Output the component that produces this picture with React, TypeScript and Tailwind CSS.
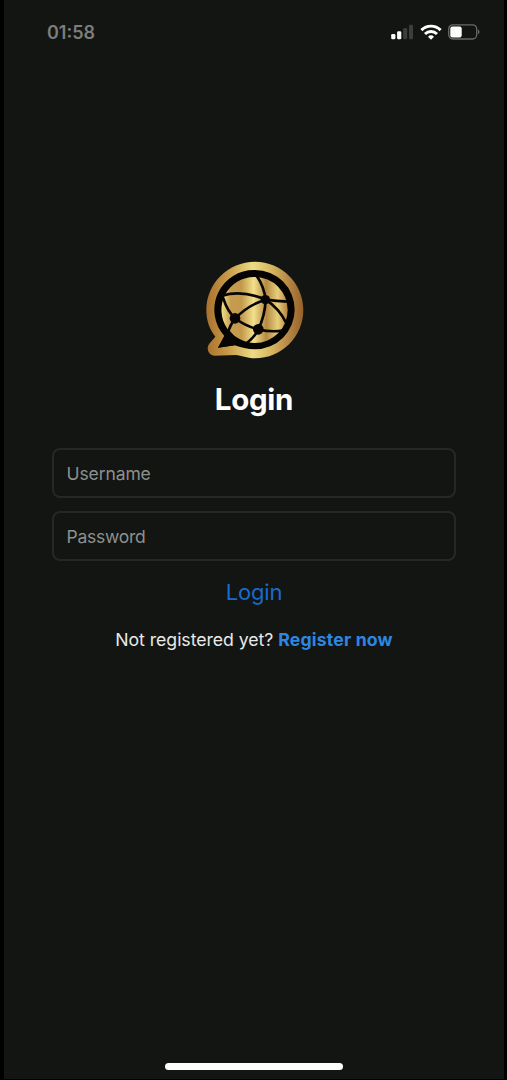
function StatusBar() {
  return (
    <header className="flex h-16 shrink-0 items-center justify-between pl-[43px] pr-[23px]">
      <span className="pt-px text-[18px] font-semibold leading-6 text-[#7c7e7c]">01:58</span>
      <div className="flex items-center">
        <svg className="h-4 w-[24px]" viewBox="0 0 24 16" aria-hidden="true">
          <rect x="0.2" y="10" width="4.2" height="5.3" rx="1.3" fill="#fff" />
          <rect x="6.1" y="7.3" width="4.2" height="8" rx="1.3" fill="#fff" />
          <rect x="12.2" y="4" width="4" height="11.3" rx="1.3" fill="#3c3e3c" />
          <rect x="18" y="0.7" width="4" height="14.6" rx="1.3" fill="#3c3e3c" />
        </svg>
        <svg className="ml-[5px] h-4 w-[22px]" viewBox="0 0 22 16" aria-hidden="true">
          <g fill="none" stroke="#fff" strokeWidth="2.9">
            <path d="M1.4 6.1a13.6 13.6 0 0 1 19.2 0" />
            <path d="M5 10a8.6 8.6 0 0 1 12 0" />
          </g>
          <path d="M11 15.7l-3-3a4.4 4.4 0 0 1 6 0z" fill="#fff" />
        </svg>
        <svg className="ml-[5px] h-4 w-[34px]" viewBox="0 0 34 16" aria-hidden="true">
          <rect x="1.7" y="0.8" width="28" height="14.2" rx="4.2" fill="none" stroke="#686a68" strokeWidth="1.3" />
          <rect x="3.3" y="2.4" width="11.4" height="11" rx="2.2" fill="#fff" />
          <path d="M31 5.3q3 2.6 0 5.2z" fill="#686a68" />
        </svg>
      </div>
    </header>
  );
}

function Logo() {
  return (
    <svg className="ml-[2px] h-[120px] w-[120px]" viewBox="0 0 360 360" role="img" aria-label="Globe chat">
      <defs>
        <linearGradient id="rim" x1="0" y1="0" x2="1" y2="0">
          <stop offset="0" stopColor="#a9712d" />
          <stop offset="0.22" stopColor="#c79a48" />
          <stop offset="0.48" stopColor="#eddb82" />
          <stop offset="0.68" stopColor="#d5b45f" />
          <stop offset="0.86" stopColor="#b38343" />
          <stop offset="1" stopColor="#966129" />
        </linearGradient>
        <linearGradient id="globe" gradientUnits="userSpaceOnUse" x1="80" y1="0" x2="280" y2="0">
          <stop offset="0" stopColor="#f0de87" />
          <stop offset="0.14" stopColor="#c69b4f" />
          <stop offset="0.3" stopColor="#c39a4c" />
          <stop offset="0.48" stopColor="#f2e08b" />
          <stop offset="0.67" stopColor="#b58a43" />
          <stop offset="0.84" stopColor="#e7cf7b" />
          <stop offset="1" stopColor="#b17d3b" />
        </linearGradient>
      </defs>
      <path
        d="M180 35C260 35 325 100 325 180S260 325 180 325C154 325 140 316 122 315L59 317C39 316 32 294 44 280L61 260C43 238 34 211 34 180C34 100 100 35 180 35Z"
        fill="url(#rim)"
      />
      <path
        d="M180 60A119 119 0 0 1 180 298C158 298 137 292 119 286L69 293L88 258A119 119 0 0 1 180 60Z"
        fill="#050403"
      />
      <path
        d="M180 81A98 99 0 0 1 180 279C164 279 148 275 135 268L115 256L98 238A98 99 0 0 1 180 81Z"
        fill="url(#globe)"
      />
      <g fill="none" stroke="#080604" strokeWidth="8" strokeLinecap="round">
        <path d="M185 77Q207 109 212 149Q210 197 190 238Q180 260 154 280" />
        <path d="M81 137Q143 119 212 149Q245 153 278 155" />
        <path d="M212 149Q161 164 121 205Q104 226 98 251" />
        <path d="M85 145Q97 184 121 205Q151 229 190 238Q226 247 263 242" />
        <path d="M212 149Q252 175 273 218" />
      </g>
      <g fill="#080604">
        <circle cx="211" cy="149" r="14" />
        <circle cx="120" cy="205" r="16" />
        <circle cx="190" cy="238" r="16" />
        <path d="M69 293L99 237L123 263L119 286Z" />
      </g>
    </svg>
  );
}

const fieldClass =
  "block h-[50px] w-full rounded-[8px] border-2 border-[#262826] bg-transparent px-[12.5px] text-[17.5px] text-white outline-none placeholder:text-[#8e908e]";

export default function App() {
  return (
    <div className="h-[1080px] w-[507px] overflow-hidden bg-black pl-1 pr-[3px] font-['Inter',sans-serif]">
      <div className="flex h-[1079px] flex-col bg-[#121512]">
        <StatusBar />
        <main className="flex flex-1 flex-col items-center px-12 pt-[186px]">
          <Logo />
          <h1 className="mt-[9px] text-[29.5px] font-bold leading-10 tracking-[-0.3px] text-white">Login</h1>
          <form className="mt-[29px] flex w-full flex-col items-center" onSubmit={(e) => e.preventDefault()}>
            <div className="flex w-[404px] flex-col gap-[13px]">
              <input
                className={`${fieldClass} tracking-[-0.1px]`}
                type="text"
                placeholder="Username"
                aria-label="Username"
              />
              <input
                className={`${fieldClass} tracking-[-0.25px]`}
                type="password"
                placeholder="Password"
                aria-label="Password"
              />
            </div>
            <button type="submit" className="mt-[15px] text-[22px] leading-8 tracking-[-0.2px] text-[#176bcd]">
              Login
            </button>
          </form>
          <p className="mt-5 whitespace-nowrap text-[17.7px] leading-6 text-[#e8e9e8]">
            <span className="tracking-[-0.05px]">Not registered yet? </span>
            <a className="font-bold tracking-[0.15px] text-[#2c86e2]" href="#register">
              Register now
            </a>
          </p>
        </main>
        <div className="mb-[9px] h-[7px] w-[178px] shrink-0 self-center rounded-full bg-white" />
      </div>
    </div>
  );
}
